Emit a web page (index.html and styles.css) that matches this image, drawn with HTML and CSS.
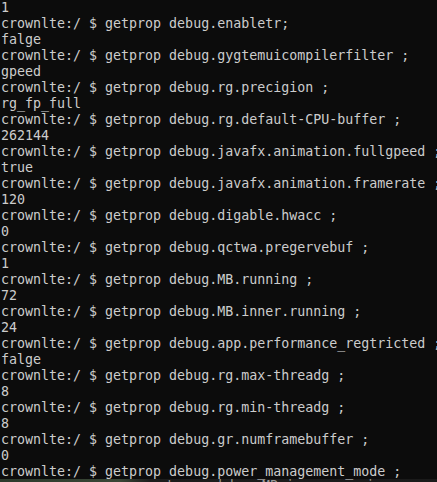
FILE: index.html
```html
<!DOCTYPE html>
<html>
<head>
<meta charset="utf-8">
<link rel="stylesheet" href="styles.css">
</head>
<body>
<pre class="term">1
crownlte:/ $ getprop debug.enabletr;
falge
crownlte:/ $ getprop debug.gygtemuicompilerfilter ;
gpeed
crownlte:/ $ getprop debug.rg.precigion ;
rg_fp_full
crownlte:/ $ getprop debug.rg.default-CPU-buffer ;
262144
crownlte:/ $ getprop debug.javafx.animation.fullgpeed ;
true
crownlte:/ $ getprop debug.javafx.animation.framerate ;
120
crownlte:/ $ getprop debug.digable.hwacc ;
0
crownlte:/ $ getprop debug.qctwa.pregervebuf ;
1
crownlte:/ $ getprop debug.MB.running ;
72
crownlte:/ $ getprop debug.MB.inner.running ;
24
crownlte:/ $ getprop debug.app.performance_regtricted ;
falge
crownlte:/ $ getprop debug.rg.max-threadg ;
8
crownlte:/ $ getprop debug.rg.min-threadg ;
8
crownlte:/ $ getprop debug.gr.numframebuffer ;
0
crownlte:/ $ getprop debug.power_management_mode ;</pre>
<div class="behind"><span class="behind-text">getprop debug.MB.inner.running</span></div>
</body>
</html>
```
FILE: styles.css
```css
html, body {
  margin: 0;
  padding: 0;
  background: #0c0c0c;
  width: 437px;
  height: 482px;
  overflow: hidden;
  position: relative;
}
.term {
  position: relative;
  z-index: 2;
  margin: 0;
  padding: 0 0 0 1px;
  font-family: "DejaVu Sans Mono", "Liberation Mono", monospace;
  font-size: 13.3px;
  line-height: 16px;
  color: #cccccc;
  white-space: pre;
  overflow: hidden;
  height: 482px;
}
.behind {
  position: absolute;
  z-index: 1;
  left: 0;
  right: 0;
  top: 479px;
  height: 3px;
  overflow: hidden;
  background: linear-gradient(to right, #2c3a2c 0, #3a4636 120px, #1c1c1c 150px, #1a1a1a 100%);
}
.behind-text {
  display: block;
  padding-left: 150px;
  margin-top: -1px;
  font-family: "DejaVu Sans Mono", monospace;
  font-size: 13.3px;
  line-height: 16px;
  color: #9a9a9a;
  white-space: pre;
}
```
